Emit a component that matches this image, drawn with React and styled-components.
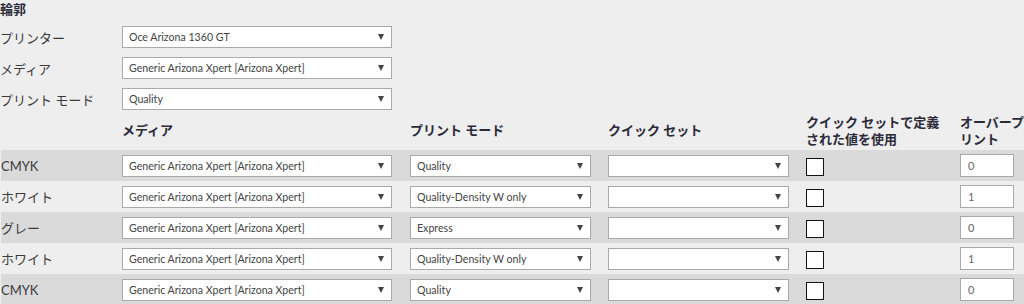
import styled, { createGlobalStyle } from "styled-components";

const GlobalStyle = createGlobalStyle`
  body {
    margin: 0;
    background: #eeeeee;
    font-family: "Lato", "Noto Sans CJK JP", sans-serif;
    color: #333333;
  }
`;

const settings = [
  { label: "プリンター", value: "Oce Arizona 1360 GT" },
  { label: "メディア", value: "Generic Arizona Xpert [Arizona Xpert]" },
  { label: "プリント モード", value: "Quality" },
];

const rows = [
  { name: "CMYK", mode: "Quality", overprint: "0" },
  { name: "ホワイト", mode: "Quality-Density W only", overprint: "1" },
  { name: "グレー", mode: "Express", overprint: "0" },
  { name: "ホワイト", mode: "Quality-Density W only", overprint: "1" },
  { name: "CMYK", mode: "Quality", overprint: "0" },
];

const MEDIA = "Generic Arizona Xpert [Arizona Xpert]";

function Select({ value, width }) {
  return (
    <SelectBox $width={width}>
      <SelectText>{value}</SelectText>
      <Arrow />
    </SelectBox>
  );
}

export default function App() {
  return (
    <>
      <GlobalStyle />
      <Page>
        <Title>輪郭</Title>
        <SettingsGrid>
          {settings.map((s) => (
            <SettingRow key={s.label}>
              <Label>{s.label}</Label>
              <Select value={s.value} width={270} />
            </SettingRow>
          ))}
        </SettingsGrid>
        <Table>
          <HeaderRow>
            <HeadCell />
            <HeadCell>メディア</HeadCell>
            <HeadCell>プリント モード</HeadCell>
            <HeadCell>クイック セット</HeadCell>
            <HeadCell>
              クイック セットで定義
              <br />
              された値を使用
            </HeadCell>
            <HeadCell>
              オーバープ
              <br />
              リント
            </HeadCell>
          </HeaderRow>
          {rows.map((r, i) => (
            <DataRow key={i} $shaded={i % 2 === 0}>
              <Label>{r.name}</Label>
              <Select value={MEDIA} width={270} />
              <Select value={r.mode} width={181} />
              <Select value="" width={181} />
              <Checkbox />
              <NumberBox>{r.overprint}</NumberBox>
            </DataRow>
          ))}
        </Table>
      </Page>
    </>
  );
}

const Page = styled.div`
  width: 1024px;
  height: 304px;
  overflow: hidden;
`;

const Title = styled.div`
  height: 26px;
  font-size: 13px;
  font-weight: bold;
  line-height: 18px;
  color: #2b2b3a;
`;

const SettingsGrid = styled.div`
  display: flex;
  flex-direction: column;
  gap: 9px;
`;

const SettingRow = styled.div`
  display: grid;
  grid-template-columns: 122px auto;
  align-items: center;
  height: 22px;
`;

const Label = styled.div`
  font-size: 13px;
  color: #3a3a3a;
  white-space: nowrap;
`;

const SelectBox = styled.div`
  box-sizing: border-box;
  width: ${(p) => p.$width}px;
  height: 22px;
  display: flex;
  align-items: center;
  justify-content: space-between;
  padding: 0 7px 0 6px;
  background: #ffffff;
  border: 1px solid #a9a9a9;
`;

const SelectText = styled.span`
  font-family: "Lato", sans-serif;
  font-size: 10.6px;
  color: #444444;
  white-space: nowrap;
`;

const Arrow = styled.span`
  width: 0;
  height: 0;
  border-left: 3px solid transparent;
  border-right: 3px solid transparent;
  border-top: 6px solid #444444;
`;

const Table = styled.div`
  margin-top: 1px;
  padding-left: 1px;
`;

const columns = "121px 288px 198px 198px 154px 64px";

const HeaderRow = styled.div`
  display: grid;
  grid-template-columns: ${columns};
  align-items: center;
  height: 39px;
`;

const HeadCell = styled.div`
  font-size: 13px;
  font-weight: bold;
  line-height: 17px;
  color: #2b2b3a;
  white-space: nowrap;
`;

const DataRow = styled.div`
  display: grid;
  grid-template-columns: ${columns};
  align-items: center;
  height: 31px;
  background: ${(p) => (p.$shaded ? "#dadada" : "transparent")};
`;

const Checkbox = styled.div`
  box-sizing: border-box;
  width: 18px;
  height: 18px;
  margin-top: 2px;
  background: #ffffff;
  border: 1.5px solid #111111;
`;

const NumberBox = styled.div`
  box-sizing: border-box;
  width: 54px;
  height: 23px;
  padding-left: 7px;
  display: flex;
  align-items: center;
  font-family: "Lato", sans-serif;
  font-size: 11px;
  color: #666666;
  background: #ffffff;
  border: 1px solid #a9a9a9;
`;
